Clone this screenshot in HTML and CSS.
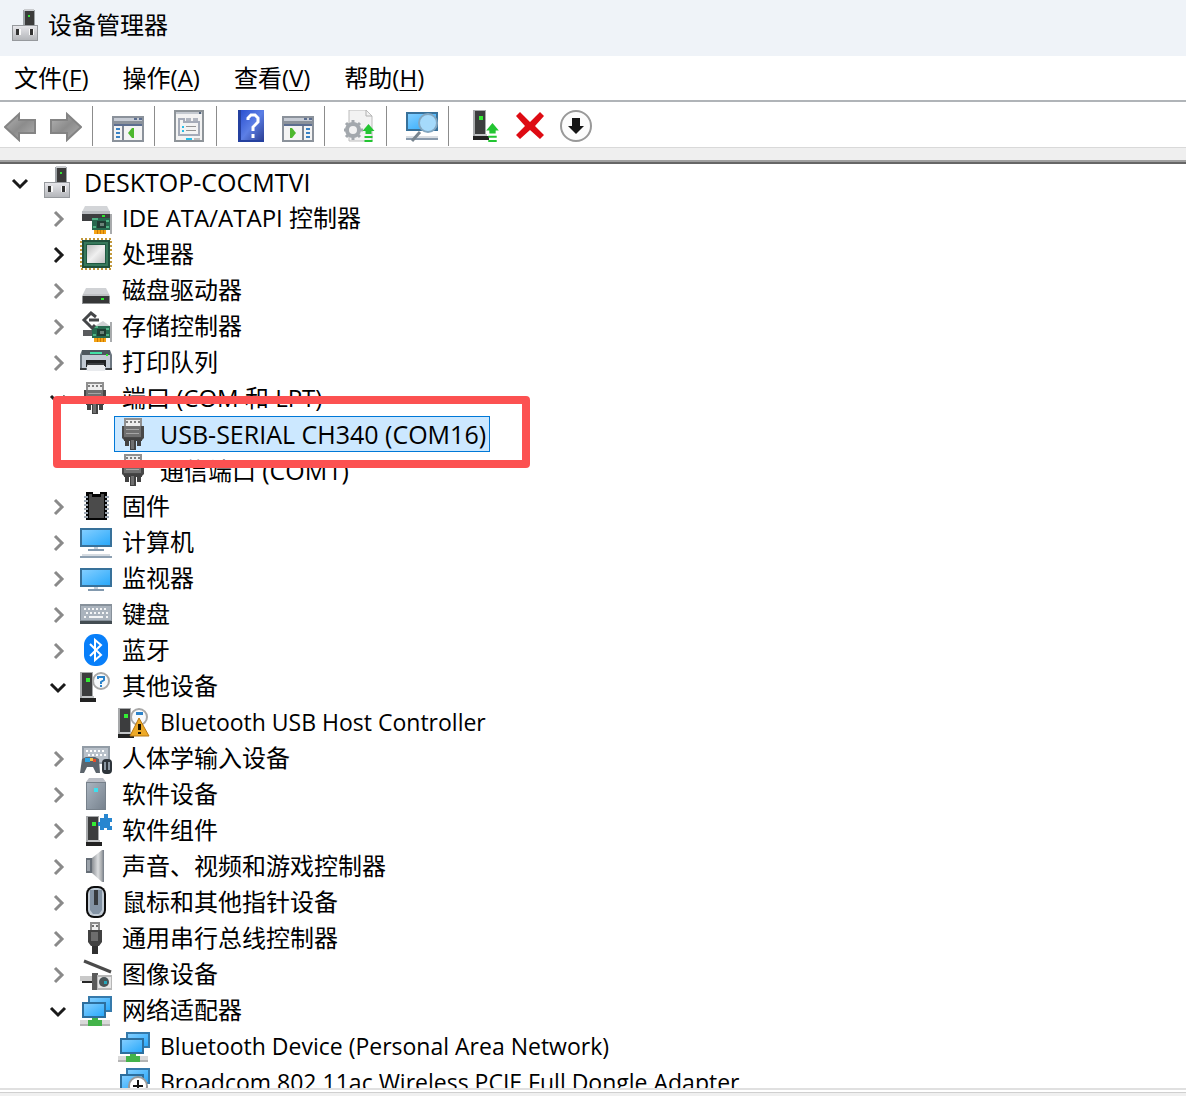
FILE: index.html
```
<!DOCTYPE html>
<html lang="zh-CN">
<head>
  <meta charset="UTF-8">
  <meta name="viewport" content="width=device-width, initial-scale=1.0">
  <title>设备管理器</title>
  <link rel="stylesheet" href="styles.css">
</head>
<body>
  <!-- Icon definitions -->
  <svg class="sprite" aria-hidden="true">
    <defs>
      <linearGradient id="g-screen" x1="0" y1="0" x2="1" y2="1"><stop offset="0" stop-color="#82ceff"/><stop offset="1" stop-color="#2aa9fb"/></linearGradient>
      <linearGradient id="g-silver" x1="0" y1="0" x2="1" y2="1"><stop offset="0" stop-color="#bdbdbd"/><stop offset="0.5" stop-color="#f0f0f0"/><stop offset="1" stop-color="#c2c2c2"/></linearGradient>
      <linearGradient id="g-base" x1="0" y1="0" x2="0" y2="1"><stop offset="0" stop-color="#e6e6ea"/><stop offset="1" stop-color="#b4b6ba"/></linearGradient>
      <linearGradient id="g-steel" x1="0" y1="0" x2="1" y2="1"><stop offset="0" stop-color="#a9b4bf"/><stop offset="1" stop-color="#77828e"/></linearGradient>
      <linearGradient id="g-arrow" x1="0" y1="0" x2="1" y2="1"><stop offset="0" stop-color="#b5b5b5"/><stop offset="0.5" stop-color="#8c8c8c"/><stop offset="1" stop-color="#b0b0b0"/></linearGradient>
      <linearGradient id="g-help" x1="0" y1="0" x2="1" y2="1"><stop offset="0" stop-color="#2a50d0"/><stop offset="0.5" stop-color="#5c7fe6"/><stop offset="1" stop-color="#2c3f94"/></linearGradient>
      <linearGradient id="g-cone" x1="0" y1="0" x2="1" y2="0"><stop offset="0" stop-color="#8c9095"/><stop offset="0.5" stop-color="#dcdee0"/><stop offset="0.8" stop-color="#a8abae"/><stop offset="1" stop-color="#737b86"/></linearGradient>
    </defs>

    <symbol id="open" viewBox="0 0 24 24"><path d="M5 10l7 7 7-7" fill="none" stroke="#1a1a1a" stroke-width="3"/></symbol>
    <symbol id="closed" viewBox="0 0 24 24"><path d="M9 6l7 7-7 7" fill="none" stroke="currentColor" stroke-width="3"/></symbol>

    <symbol id="root" viewBox="0 0 32 32">
      <path fill="#9da2a6" d="M13 1h12v16H13z"/><path fill="#3b3b3b" d="M15 2h9v14h-9z"/><path fill="#c9cbce" d="M14 0h10v2H14z"/><path fill="#35e235" d="M18 6h2v2h-2z"/>
      <path fill="#96999d" d="M2 16h26v16H2z"/><path fill="url(#g-base)" d="M3 17h24v14H3z"/><path fill="#f8f8f8" d="M6 20h5v6H6zM19 20h5v6h-5z"/><path fill="#333" d="M6 20h3v6H6zM20 20h3v6h-3z"/>
    </symbol>
    <symbol id="board" viewBox="0 0 32 32">
      <path fill="#a9abad" d="M30 12h2v20h-2z"/><path fill="#27694f" d="M12 16h18v12H12z"/><path fill="#4fb184" d="M12 16h6v2h-6zM13 24h3v2h-3zM26 18h3v2h-3zM26 24h3v2h-3z"/><path fill="#203c33" d="M17 19h9v7h-9z"/><path fill="#6a8379" d="M20 21h4v3h-4z"/><path fill="#f5a313" d="M14 28h12v4H14z"/><path fill="#c97a06" d="M17 28h1v4h-1zM20 28h1v4h-1zM23 28h1v4h-1z"/>
    </symbol>
    <symbol id="ide" viewBox="0 0 32 32">
      <path fill="#d3d5d8" d="M5 4h22l3 6H2z"/><path fill="#b8bbbf" d="M2 9h28v3H2z"/><path fill="#3d3e40" d="M2 12h28v7H2z"/><use href="#board"/><path fill="#2ee62e" d="M22 13h3v2h-3z"/>
    </symbol>
    <symbol id="cpu" viewBox="0 0 32 32">
      <path d="M1 1h30v30H1z" fill="none" stroke="#c2993d" stroke-width="2" stroke-dasharray="2 2"/><path fill="#1f4f3b" d="M2 2h28v28H2z"/><path fill="#37785a" d="M4 4h24v24H4z"/><path fill="#1f5941" d="M6 6h20v20H6z"/><path fill="url(#g-silver)" d="M7 7h18v18H7z"/>
    </symbol>
    <symbol id="disk" viewBox="0 0 32 32">
      <path fill="#d0d2d5" d="M6 14h20l4 8H2z"/><path fill="#bfc1c4" d="M3 20h26v2H3z"/><path fill="#8f9193" d="M2 22h28v8H2z"/><path fill="#363738" d="M3 22h26v7H3z"/><path fill="#31e931" d="M21 24h3v2h-3z"/>
    </symbol>
    <symbol id="storage" viewBox="0 0 32 32">
      <path fill="#cfd1d3" d="M18 14l5-3 7 5H15z"/><path fill="#595b5d" d="M3 20h11v6H3z"/><use href="#board"/><path fill="none" stroke="#444648" stroke-width="3" d="M16 7l-5-4-7 7 8 8 3-3M9 10h10"/>
    </symbol>
    <symbol id="printer" viewBox="0 0 32 32">
      <path fill="#6c7680" d="M2 4h28l2 5v15H0V9z"/><path fill="#4d565e" d="M2 4h28v5H2z"/><path fill="#c2cad4" d="M2 9h28v13H2z"/><path fill="#43e0a6" d="M10 6h12v2H10z"/><path fill="#2ee62e" d="M26 8h2v2h-2z"/><path fill="#202224" d="M6 14h20v7H6z"/><path fill="#e9ebee" d="M8 18h16v2h1v5H7v-5z"/><path fill="#3a3d40" d="M8 17h16v2H8zM0 22h6v2H0zM26 22h6v2h-6z"/>
    </symbol>
    <symbol id="port" viewBox="0 0 32 32">
      <path fill="#909090" d="M6 0h18v9H6z"/><path fill="#ededed" d="M8 2h14v7H8z"/><path fill="#7e7e7e" d="M8 3h2v2H8zM12 3h2v2h-2zM16 3h2v2h-2zM20 3h2v2h-2z"/><path fill="#484848" d="M4 8h22v12l-2 2H6l-2-2z"/><path fill="#707070" d="M6 8h17v11H6z"/><path fill="#a5a5a5" d="M8 11h13v1H8zM8 15h13v1H8z"/><path fill="#424242" d="M6 20h18v3h-1v5h-4v-5h-1v9h-6v-9h-1v5H7v-5H6z"/><path fill="#707070" d="M13 22h3v9h-3z"/>
    </symbol>
    <symbol id="chip" viewBox="0 0 32 32">
      <path fill="#050505" d="M6 2h7v2h7V2h7v28H6z"/><path fill="#4b4b4b" d="M9 4h3v3h9V4h3v24H9z"/><path fill="none" stroke="#9da7b2" stroke-width="4" stroke-dasharray="2 2" d="M6 6v22M27 6v22"/>
    </symbol>
    <symbol id="computer" viewBox="0 0 32 32">
      <path fill="#38719a" d="M0 2h32v19H0z"/><path fill="url(#g-screen)" d="M2 4h28v15H2z"/><path fill="#c5cdd6" d="M14 21h4v2h-4z"/><path fill="#8299ae" d="M8 23h16v2H8z"/><path fill="#d5dbe1" d="M2 28h28v2H2z"/><path fill="#8da0b2" d="M0 30h32v2H0z"/>
    </symbol>
    <symbol id="monitor" viewBox="0 0 32 32">
      <path fill="#38719a" d="M0 6h32v19H0z"/><path fill="url(#g-screen)" d="M2 8h28v15H2z"/><path fill="#c5cdd6" d="M14 25h4v2h-4z"/><path fill="#8299ae" d="M8 27h16v2H8z"/>
    </symbol>
    <symbol id="keyboard" viewBox="0 0 32 32">
      <path fill="#87919b" d="M0 6h32v20H0z"/><path fill="#aab3bd" d="M1 8h30v14H1z"/><path stroke="#f4f5f6" stroke-width="2" stroke-dasharray="2 2" d="M4 11h24M6 15h22M4 19h4M26 19h2"/><path fill="#f4f5f6" d="M9 18h14v2H9z"/><path fill="#434c52" d="M0 23h32v3H0z"/>
    </symbol>
    <symbol id="bluetooth" viewBox="0 0 32 32">
      <rect x="4" y="0" width="24" height="32" rx="11" fill="#087ffa"/><path fill="none" stroke="#fff" stroke-width="2" d="M10 10l11 11-6 5V6l6 5-11 11"/>
    </symbol>
    <symbol id="tower" viewBox="0 0 16 32">
      <path fill="#a7a9ab" d="M0 2h13v26H0z"/><path fill="#3c3d3e" d="M2 3h10v25H2z"/><path fill="#34ed34" d="M6 8h4v4H6z"/><path fill="#c3c5c7" d="M2 26h12v2H2z"/><path fill="#222" d="M0 28h16v4H0z"/>
    </symbol>
    <symbol id="other" viewBox="0 0 32 32">
      <use href="#tower" width="16" height="32"/><circle cx="21" cy="11" r="8" fill="#f7f9fb" stroke="#a8a8a8" stroke-width="2"/><path fill="none" stroke="#2b82c9" stroke-width="2" d="M18 9V7h6v3l-3 2v2M21 15v2"/>
    </symbol>
    <symbol id="warning" viewBox="0 0 32 32">
      <use href="#tower" width="16" height="32"/><circle cx="21" cy="11" r="8" fill="#f7f9fb" stroke="#a8a8a8" stroke-width="2"/><path fill="#2b82c9" d="M18 6h7v3h-7z"/><path fill="#eda927" stroke="#b97812" d="M21 12l10 18H12z"/><path fill="#1d1400" d="M20 18h3v6h-3zM20 26h3v2h-3z"/>
    </symbol>
    <symbol id="hid" viewBox="0 0 32 32">
      <path fill="#929ca6" d="M2 4h28v18H2z"/><path fill="#b9c1ca" d="M4 6h24v14H4z"/><path stroke="#fff" stroke-width="2" stroke-dasharray="2 2" d="M6 9h20M8 13h18"/>
      <path fill="#5b646c" d="M2 17l4-2h9l4 2 1 14h-4l-3-6H7l-3 6H0z"/><path fill="#2aa5e8" d="M5 16h5v4H5z"/><path fill="#f0c04c" d="M10 16h3v3h-3z"/><path fill="#e74b29" d="M13 17h3v3h-3z"/><rect x="22" y="17" width="10" height="15" rx="4" fill="#2d343a"/><path fill="#8b97a2" d="M24 20h2v8h-2zM28 20h2v8h-2z"/>
    </symbol>
    <symbol id="softdevice" viewBox="0 0 32 32">
      <path fill="#b9bdc5" d="M9 0h14l3 4H6z"/><path fill="#77818b" d="M6 4h20v28H6z"/><path fill="url(#g-steel)" d="M7 5h18v26H7z"/><path fill="#3ce0ee" d="M14 10h4v4h-4z"/>
    </symbol>
    <symbol id="component" viewBox="0 0 32 32">
      <use href="#tower" x="6" width="16" height="32"/><path fill="#2786d0" d="M20 4h4V0h4v4h4v4h-2v4h2v4h-5v-2h-3v2h-4v-4h-2V8h2z"/>
    </symbol>
    <symbol id="sound" viewBox="0 0 32 32">
      <path fill="#656d76" d="M6 8h7v15H6z"/><path fill="#9ba2aa" d="M7 10h3v11H7z"/><path fill="url(#g-cone)" d="M12 8l10-8h2v32h-2l-10-9z"/>
    </symbol>
    <symbol id="mouse" viewBox="0 0 32 32">
      <rect x="6" y="0" width="20" height="32" rx="8" fill="#0c0c0c"/><rect x="8" y="2" width="16" height="28" rx="6" fill="#c0cad4"/><path fill="#8393a4" d="M10 4h12v20l-3 4h-6l-3-4z"/><path fill="#363a3e" d="M14 4h4v15h-4z"/>
    </symbol>
    <symbol id="usb" viewBox="0 0 32 32">
      <path fill="#8d8d8d" d="M10 0h10v9H10z"/><path fill="#eee" d="M12 2h6v7h-6z"/><path fill="#707070" d="M12 3h2v2h-2zM16 3h2v2h-2z"/><path fill="#414141" d="M8 8h14v12l-3 4H11l-3-4z"/><path fill="#6d6d6d" d="M11 10h7v9h-7z"/><path fill="#303030" d="M12 24h6v8h-6z"/>
    </symbol>
    <symbol id="camera" viewBox="0 0 32 32">
      <path stroke="#4a4a4a" stroke-width="3" d="M4 3l27 11"/><path fill="#c9c9c9" d="M0 18h12v5H0z"/><path fill="#282828" d="M2 23h10v2H2z"/><path fill="#5a5a5a" d="M12 15h6v17h-6z"/><path fill="#b7b7b7" d="M17 17h15v15H17z"/><path fill="#e5e5e5" d="M18 19h13v11H18z"/><circle cx="24" cy="24" r="5" fill="#4a5558"/><path fill="#25a6b8" d="M24 23h3v3h-3z"/>
    </symbol>
    <symbol id="network" viewBox="0 0 32 32">
      <path fill="#367aab" d="M8 2h24v16H8z"/><path fill="url(#g-screen)" d="M10 4h20v12H10z"/><path fill="#2d6f9e" d="M2 8h24v16H2z"/><path fill="url(#g-screen)" d="M4 10h20v12H4z"/><path fill="#d9d9d9" d="M0 26h30v4H0z"/><path fill="#b4b4b4" d="M0 30h30v2H0z"/><path fill="#43b34a" d="M12 24h6v2h4v6H8v-6h4z"/>
    </symbol>
    <symbol id="netdown" viewBox="0 0 32 32">
      <use href="#network"/><circle cx="20" cy="20" r="9" fill="#fff" stroke="#9a9a9a" stroke-width="2"/><path fill="#111" d="M19 14h2v5h4v2h-4v4h-2v-4h-4v-2h4z"/>
    </symbol>

    <symbol id="back" viewBox="0 0 32 32"><path fill="url(#g-arrow)" stroke="#848484" stroke-width="2" d="M1 17L15 4v6h16v13H15v7z"/></symbol>
    <symbol id="forward" viewBox="0 0 32 32"><path fill="url(#g-arrow)" stroke="#848484" stroke-width="2" d="M31 17L17 4v6H1v13h16v7z"/></symbol>
    <symbol id="window" viewBox="0 0 32 32">
      <path fill="#8b929b" d="M0 6h32v26H0z"/><path fill="#c7ccd5" d="M2 8h28v3H2z"/><path fill="#5c6e90" d="M22 8h3v2h-3zM27 8h3v2h-3zM2 14h28v2H2z"/><path fill="#f4f4f4" d="M2 16h28v14H2z"/>
    </symbol>
    <symbol id="showtree" viewBox="0 0 32 32"><use href="#window"/><path fill="#7f8793" d="M10 16h2v14h-2z"/><path fill="#3982c4" d="M4 18h4v2H4zM4 22h4v2H4zM4 26h4v2H4z"/><path fill="#4db82e" d="M22 18v10h-2l-4-5 4-5z"/></symbol>
    <symbol id="showactions" viewBox="0 0 32 32"><use href="#window"/><path fill="#7f8793" d="M20 16h2v14h-2z"/><path fill="#3982c4" d="M24 18h4v2h-4zM24 22h4v2h-4zM24 26h4v2h-4z"/><path fill="#4db82e" d="M8 18v10h2l4-5-4-5z"/></symbol>
    <symbol id="properties" viewBox="0 0 32 32">
      <path fill="#8e9499" d="M0 0h30v32H0z"/><path fill="#f3f3f3" d="M2 4h26v26H2z"/><path fill="#c4c9d0" d="M2 2h26v2H2z"/><path fill="#52647c" d="M25 2h2v2h-2z"/><path fill="none" stroke="#a5abb8" stroke-width="2" d="M5 25V9h5v3h15v13z"/><path fill="#b1b6c0" d="M12 8h5v3h-5zM19 8h5v3h-5z"/><path fill="#26bde8" d="M8 16h2v2H8zM8 20h2v2H8zM12 28h6v2h-6z"/><path fill="#949494" d="M12 16h10v1H12zM12 20h10v1H12z"/><path fill="#bdbdbd" d="M20 28h6v2h-6z"/>
    </symbol>
    <symbol id="help" viewBox="0 0 32 32"><path fill="#24409f" d="M2 0h26v32H2z"/><path fill="url(#g-help)" d="M5 0h23v30H5z"/><path fill="none" stroke="#fff" stroke-width="3" d="M12 10V8l3-3h4l3 3v4l-5 5v4M17 24v4"/></symbol>
    <symbol id="uparrow" viewBox="0 0 12 18"><path fill="#23c532" d="M6 0l6 7H9v3H3V7H0zM2 12h8v2H2zM2 16h8v2H2z"/></symbol>
    <symbol id="update" viewBox="0 0 32 32">
      <path fill="#f2f2f2" stroke="#bcbcbc" d="M5 0h17l6 6v25H5z"/><path fill="none" stroke="#b0b0b0" d="M22 0v6h6"/><circle cx="9" cy="20" r="6" fill="#f2f2f2" stroke="#a3a8ad" stroke-width="4"/><path stroke="#a3a8ad" stroke-width="3" d="M9 10v4M9 26v4M0 20h3M15 20h4M2 13l3 3M13 24l3 3M2 27l3-3M13 16l3-3"/><use href="#uparrow" x="17" y="14" width="15" height="18"/>
    </symbol>
    <symbol id="scan" viewBox="0 0 32 32">
      <path fill="#38719a" d="M0 2h32v19H0z"/><path fill="url(#g-screen)" d="M2 4h28v15H2z"/><path fill="#d9dee3" d="M0 26h32v2H0z"/><path fill="#899aac" d="M0 28h32v2H0z"/><path stroke="#78858f" stroke-width="3" d="M14 22l-8 9"/><circle cx="22" cy="13" r="9" fill="#a5dafb" stroke="#82a6c0" stroke-width="2"/>
    </symbol>
    <symbol id="enable" viewBox="0 0 32 32"><use href="#tower" x="5" y="-2" width="16" height="32"/><use href="#uparrow" x="17" y="13" width="15" height="19"/></symbol>
    <symbol id="remove" viewBox="0 0 32 32"><path fill="#de0b13" d="M2 6l4-4 10 10L26 2l4 4-9 10 9 9-4 4-10-9L6 29l-4-4 9-9z"/></symbol>
    <symbol id="disable" viewBox="0 0 32 32"><circle cx="16" cy="16" r="15" fill="#fcfcfc" stroke="#999" stroke-width="2"/><path fill="#151515" d="M12 8h8v8h4l-8 8-8-8h4z"/></symbol>
  </svg>

  <header class="titlebar">
    <svg class="icon"><use href="#root"/></svg>
    <h1>设备管理器</h1>
  </header>

  <nav class="menubar">
    <button>文件(<u>F</u>)</button>
    <button>操作(<u>A</u>)</button>
    <button>查看(<u>V</u>)</button>
    <button>帮助(<u>H</u>)</button>
  </nav>

  <div class="toolbar">
    <button aria-label="后退"><svg class="icon"><use href="#back"/></svg></button>
    <button aria-label="前进"><svg class="icon"><use href="#forward"/></svg></button>
    <span class="separator"></span>
    <button aria-label="显示控制台树"><svg class="icon"><use href="#showtree"/></svg></button>
    <span class="separator"></span>
    <button aria-label="属性"><svg class="icon"><use href="#properties"/></svg></button>
    <span class="separator"></span>
    <button aria-label="帮助"><svg class="icon"><use href="#help"/></svg></button>
    <button aria-label="显示操作窗格"><svg class="icon"><use href="#showactions"/></svg></button>
    <span class="separator"></span>
    <button aria-label="更新驱动程序"><svg class="icon"><use href="#update"/></svg></button>
    <span class="separator"></span>
    <button aria-label="扫描硬件改动"><svg class="icon"><use href="#scan"/></svg></button>
    <span class="separator"></span>
    <button aria-label="启用设备"><svg class="icon"><use href="#enable"/></svg></button>
    <button aria-label="卸载设备"><svg class="icon"><use href="#remove"/></svg></button>
    <button aria-label="禁用设备"><svg class="icon"><use href="#disable"/></svg></button>
  </div>

  <main class="pane">
    <ul class="tree">
      <li>
        <div class="row"><button class="toggle" aria-label="折叠"><svg><use href="#open"/></svg></button><span class="item"><svg class="icon"><use href="#root"/></svg><span class="caps">DESKTOP-COCMTVI</span></span></div>
        <ul>
          <li><div class="row"><button class="toggle" aria-label="展开"><svg><use href="#closed"/></svg></button><span class="item"><svg class="icon"><use href="#ide"/></svg>IDE ATA/ATAPI 控制器</span></div></li>
          <li><div class="row"><button class="toggle hot" aria-label="展开"><svg><use href="#closed"/></svg></button><span class="item"><svg class="icon"><use href="#cpu"/></svg>处理器</span></div></li>
          <li><div class="row"><button class="toggle" aria-label="展开"><svg><use href="#closed"/></svg></button><span class="item"><svg class="icon"><use href="#disk"/></svg>磁盘驱动器</span></div></li>
          <li><div class="row"><button class="toggle" aria-label="展开"><svg><use href="#closed"/></svg></button><span class="item"><svg class="icon"><use href="#storage"/></svg>存储控制器</span></div></li>
          <li><div class="row"><button class="toggle" aria-label="展开"><svg><use href="#closed"/></svg></button><span class="item"><svg class="icon"><use href="#printer"/></svg>打印队列</span></div></li>
          <li>
            <div class="row"><button class="toggle" aria-label="折叠"><svg><use href="#open"/></svg></button><span class="item"><svg class="icon"><use href="#port"/></svg>端口 (COM 和 LPT)</span></div>
            <ul>
              <li><div class="row leaf"><span class="item selected"><svg class="icon"><use href="#port"/></svg><span class="caps">USB-SERIAL CH340 (COM16)</span><span class="marker"></span></span></div></li>
              <li><div class="row leaf"><span class="item"><svg class="icon"><use href="#port"/></svg><span>通信端口 <span class="caps">(COM1)</span></span></span></div></li>
            </ul>
          </li>
          <li><div class="row"><button class="toggle" aria-label="展开"><svg><use href="#closed"/></svg></button><span class="item"><svg class="icon"><use href="#chip"/></svg>固件</span></div></li>
          <li><div class="row"><button class="toggle" aria-label="展开"><svg><use href="#closed"/></svg></button><span class="item"><svg class="icon"><use href="#computer"/></svg>计算机</span></div></li>
          <li><div class="row"><button class="toggle" aria-label="展开"><svg><use href="#closed"/></svg></button><span class="item"><svg class="icon"><use href="#monitor"/></svg>监视器</span></div></li>
          <li><div class="row"><button class="toggle" aria-label="展开"><svg><use href="#closed"/></svg></button><span class="item"><svg class="icon"><use href="#keyboard"/></svg>键盘</span></div></li>
          <li><div class="row"><button class="toggle" aria-label="展开"><svg><use href="#closed"/></svg></button><span class="item"><svg class="icon"><use href="#bluetooth"/></svg>蓝牙</span></div></li>
          <li>
            <div class="row"><button class="toggle" aria-label="折叠"><svg><use href="#open"/></svg></button><span class="item"><svg class="icon"><use href="#other"/></svg>其他设备</span></div>
            <ul>
              <li><div class="row leaf"><span class="item"><svg class="icon"><use href="#warning"/></svg><span class="latin">Bluetooth USB Host Controller</span></span></div></li>
            </ul>
          </li>
          <li><div class="row"><button class="toggle" aria-label="展开"><svg><use href="#closed"/></svg></button><span class="item"><svg class="icon"><use href="#hid"/></svg>人体学输入设备</span></div></li>
          <li><div class="row"><button class="toggle" aria-label="展开"><svg><use href="#closed"/></svg></button><span class="item"><svg class="icon"><use href="#softdevice"/></svg>软件设备</span></div></li>
          <li><div class="row"><button class="toggle" aria-label="展开"><svg><use href="#closed"/></svg></button><span class="item"><svg class="icon"><use href="#component"/></svg>软件组件</span></div></li>
          <li><div class="row"><button class="toggle" aria-label="展开"><svg><use href="#closed"/></svg></button><span class="item"><svg class="icon"><use href="#sound"/></svg>声音、视频和游戏控制器</span></div></li>
          <li><div class="row"><button class="toggle" aria-label="展开"><svg><use href="#closed"/></svg></button><span class="item"><svg class="icon"><use href="#mouse"/></svg>鼠标和其他指针设备</span></div></li>
          <li><div class="row"><button class="toggle" aria-label="展开"><svg><use href="#closed"/></svg></button><span class="item"><svg class="icon"><use href="#usb"/></svg>通用串行总线控制器</span></div></li>
          <li><div class="row"><button class="toggle" aria-label="展开"><svg><use href="#closed"/></svg></button><span class="item"><svg class="icon"><use href="#camera"/></svg>图像设备</span></div></li>
          <li>
            <div class="row"><button class="toggle" aria-label="折叠"><svg><use href="#open"/></svg></button><span class="item"><svg class="icon"><use href="#network"/></svg>网络适配器</span></div>
            <ul>
              <li><div class="row leaf"><span class="item"><svg class="icon"><use href="#network"/></svg><span class="latin">Bluetooth Device (Personal Area Network)</span></span></div></li>
              <li><div class="row leaf"><span class="item"><svg class="icon"><use href="#netdown"/></svg><span class="latin">Broadcom 802.11ac Wireless PCIE Full Dongle Adapter</span></span></div></li>
            </ul>
          </li>
        </ul>
      </li>
    </ul>
  </main>

  <footer class="statusbar"></footer>
</body>
</html>
```

FILE: styles.css
```
* {
  box-sizing: border-box;
}
body {
  display: flex;
  flex-direction: column;
  height: 100vh;
  margin: 0;
  overflow: hidden;
  background: #fff;
  color: #000;
  font-family: "Open Sans", "Noto Sans CJK SC", sans-serif;
  font-size: 24px;
  line-height: 34px;
}
button {
  padding: 0;
  border: none;
  background: none;
  color: inherit;
  font: inherit;
}
ul {
  margin: 0;
  padding: 0;
  list-style: none;
}
.sprite {
  position: absolute;
  width: 0;
  height: 0;
}
.icon {
  flex: none;
  display: block;
  width: 32px;
  height: 32px;
}

/* Title and menu */
.titlebar {
  flex: none;
  display: flex;
  align-items: center;
  gap: 6px;
  height: 56px;
  padding: 0 10px 6px;
  background: #eff3f8;
}
.titlebar h1 {
  margin: 0;
  font-size: 24px;
  font-weight: 400;
}
.menubar {
  flex: none;
  display: flex;
  align-items: center;
  gap: 34px;
  height: 46px;
  padding: 0 14px;
  border-bottom: 2px solid #b0b4b8;
}
.menubar u {
  text-decoration-thickness: 1px;
  text-underline-offset: 3px;
}

/* Toolbar */
.toolbar {
  flex: none;
  display: flex;
  align-items: center;
  height: 62px;
  padding-bottom: 14px;
  background: linear-gradient(#fff 45px, #d9d9d9 45px, #d9d9d9 46px, #efefef 46px, #efefef 58px, #a0a0a0 58px, #a0a0a0 60px, #666 60px);
}
.toolbar button {
  padding: 0 10px 0 4px;
}
.separator {
  width: 1px;
  height: 40px;
  margin-right: 15px;
  background: #8c8c8c;
}

/* Device tree */
.pane {
  flex: 1;
  min-height: 0;
  overflow: hidden;
}
.tree ul {
  padding-left: 38px;
}
.row {
  display: flex;
  align-items: center;
  height: 36px;
  padding-left: 8px;
}
.leaf {
  padding-left: 38px;
}
.toggle {
  flex: none;
  width: 24px;
  height: 24px;
  margin-right: 6px;
  color: #8a8a8a;
}
.toggle svg {
  display: block;
  width: 24px;
  height: 24px;
}
.hot {
  color: #1a1a1a;
}
.item {
  position: relative;
  display: flex;
  align-items: center;
  gap: 10px;
  height: 36px;
  padding: 0 3px;
  border: 1px solid transparent;
  white-space: nowrap;
}
.latin {
  font-size: 23px;
}
.caps {
  font-size: 25px;
}
.selected {
  border-color: #0078d7;
  background: #cce8ff;
}
/* Highlight frame drawn over the neighbouring rows */
.marker {
  position: absolute;
  z-index: 1;
  inset: -21px -41px -17px -62px;
  border: 8px solid #fc5151;
  border-radius: 4px;
}

/* Status bar */
.statusbar {
  flex: none;
  height: 8px;
  border-top: 2px solid #e0e0e0;
  background: linear-gradient(#fff 2px, #d0d0d0 2px, #d0d0d0 3px, #f0f0f0 3px);
}
```
